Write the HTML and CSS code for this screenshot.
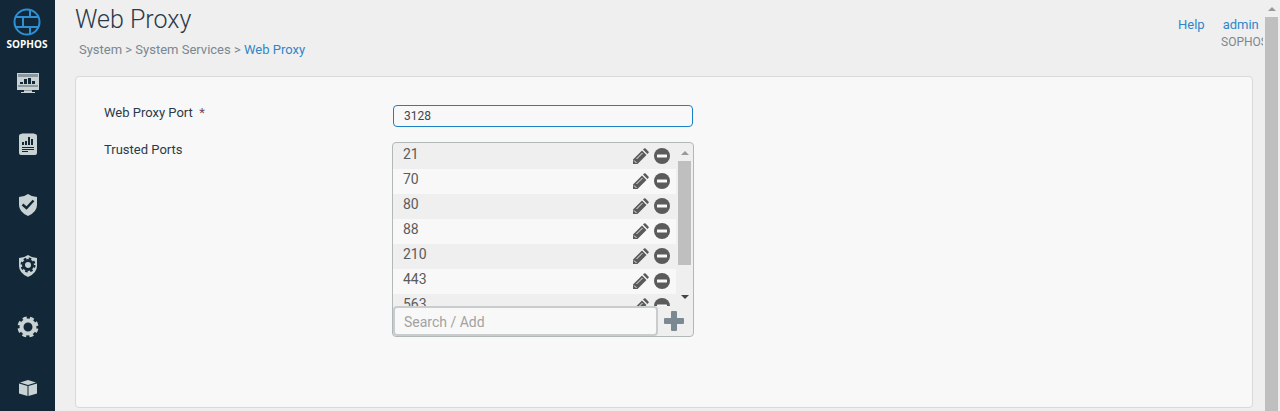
FILE: index.html
```html
<!DOCTYPE html>
<html lang="en">
<head>
    <meta charset="UTF-8">
    <meta name="viewport" content="width=device-width, initial-scale=1.0">
    <title>Web Proxy</title>
    <link rel="stylesheet" href="styles.css">
</head>
<body>
    <!-- Shared icons -->
    <svg class="sprite" aria-hidden="true">
        <symbol id="icon-edit" viewBox="0 0 16 16">
            <path fill="#5b5b5b" d="M0 16v-4.500L9 2.500l4.500 4.500-9 9zM10 1.600l1-1q.8-.8 1.600 0l2.800 2.800q.8.800 0 1.600l-1 1z"/>
            <path stroke="#efefef" fill="none" d="M3.500 11l6-6M1 12.500l2.500 2.500"/>
        </symbol>
        <symbol id="icon-remove" viewBox="0 0 16 16">
            <circle cx="8" cy="8" r="8" fill="#5b5b5b"/>
            <rect x="3" y="6.500" width="10" height="3" rx=".5" fill="#f8f8f8"/>
        </symbol>
    </svg>

    <nav class="sidebar">
        <a href="#" class="logo">
            <svg width="28" height="28" viewBox="0 0 28 28" fill="none" stroke="#2f8fd3" stroke-width="2">
                <circle cx="14" cy="14" r="12.500"/>
                <path d="M3 9h22M3 19h22M17 2v7M10 9v10M17 19v7"/>
            </svg>
            <span>SOPHOS</span>
        </a>
        <a href="#" class="nav-item" aria-label="Control center">
            <svg width="22" height="20" viewBox="0 0 22 20">
                <path fill="#c9d2d2" d="M0 0h22v17H0zM7 17h8v2H7zM4 19h14v1H4z"/>
                <path fill="#8c989c" d="M1 1h20v3H1zM1 12h20v2H1zM7 17h8v1H7z"/>
                <path fill="#122838" d="M3 9h3v2H3zM7 6h3v5H7zM11 5h3v6h-3zM15 8h3v3h-3z"/>
            </svg>
        </a>
        <a href="#" class="nav-item" aria-label="Reports">
            <svg width="18" height="22" viewBox="0 0 18 22">
                <path fill="#76848b" d="M3 0h12l2 3H1z"/>
                <rect y="1" width="18" height="21" rx="2" fill="#c9d2d2"/>
                <path fill="#122838" d="M3 9h2v3H3zM6 8h2v4H6zM9 4h2v8H9zM12 6h2v6h-2zM3 14h12v1H3zM3 16h12v1H3zM3 18h6v1H3z"/>
            </svg>
        </a>
        <a href="#" class="nav-item" aria-label="Protect">
            <svg width="18" height="22" viewBox="0 0 18 22">
                <path fill="#c9d2d2" d="M9 0q4 3 9 3v8q0 7-9 11-9-4-9-11V3q5 0 9-3z"/>
                <path fill="none" stroke="#122838" stroke-width="2.500" d="M3.500 10.500l4 3.500 7-7.500"/>
            </svg>
        </a>
        <a href="#" class="nav-item" aria-label="Configure">
            <svg width="18" height="22" viewBox="0 0 18 22">
                <path fill="#c9d2d2" d="M9 0q4 3 9 3v8q0 7-9 11-9-4-9-11V3q5 0 9-3z"/>
                <circle cx="9" cy="10" r="6.500" fill="none" stroke="#122838" stroke-width="2" stroke-dasharray="2.600 2.500"/>
                <circle cx="9" cy="10" r="4.500" fill="#c9d2d2" stroke="#122838" stroke-width="3"/>
            </svg>
        </a>
        <a href="#" class="nav-item" aria-label="System">
            <svg width="22" height="22" viewBox="0 0 22 22" fill="none" stroke="#c9d2d2">
                <circle cx="11" cy="11" r="6.500" stroke-width="4"/>
                <circle cx="11" cy="11" r="9" stroke-width="3" stroke-dasharray="4 3.070" transform="rotate(10 11 11)"/>
            </svg>
        </a>
        <a href="#" class="nav-item" aria-label="Packages">
            <svg width="18" height="16" viewBox="0 0 18 16" fill="#c9d2d2">
                <path d="M9 0l8 2.500L9 5 1 2.500zM0 3.500l8.500 2.500V16L0 13.500zM18 3.500L9.500 6V16l8.500-2.500z"/>
            </svg>
        </a>
    </nav>

    <main class="content">
        <header class="header">
            <div>
                <h1>Web Proxy</h1>
                <div class="breadcrumb">System &gt; System Services &gt; <a href="#">Web Proxy</a></div>
            </div>
            <div class="account">
                <div class="account-links">
                    <a href="#">Help</a>
                    <a href="#">admin</a>
                </div>
                <div class="company">SOPHOS</div>
            </div>
        </header>

        <form class="panel">
            <div class="form-row">
                <label for="proxyPort">Web Proxy Port &nbsp;<span class="required">*</span></label>
                <input type="text" id="proxyPort" class="text-input" value="3128">
            </div>
            <div class="form-row">
                <label for="portSearch">Trusted Ports</label>
                <div class="port-box">
                    <div class="port-scroll">
                        <ul class="port-list">
                            <li><span>21</span><button type="button" aria-label="Edit"><svg><use href="#icon-edit"/></svg></button><button type="button" aria-label="Remove"><svg><use href="#icon-remove"/></svg></button></li>
                            <li><span>70</span><button type="button" aria-label="Edit"><svg><use href="#icon-edit"/></svg></button><button type="button" aria-label="Remove"><svg><use href="#icon-remove"/></svg></button></li>
                            <li><span>80</span><button type="button" aria-label="Edit"><svg><use href="#icon-edit"/></svg></button><button type="button" aria-label="Remove"><svg><use href="#icon-remove"/></svg></button></li>
                            <li><span>88</span><button type="button" aria-label="Edit"><svg><use href="#icon-edit"/></svg></button><button type="button" aria-label="Remove"><svg><use href="#icon-remove"/></svg></button></li>
                            <li><span>210</span><button type="button" aria-label="Edit"><svg><use href="#icon-edit"/></svg></button><button type="button" aria-label="Remove"><svg><use href="#icon-remove"/></svg></button></li>
                            <li><span>443</span><button type="button" aria-label="Edit"><svg><use href="#icon-edit"/></svg></button><button type="button" aria-label="Remove"><svg><use href="#icon-remove"/></svg></button></li>
                            <li><span>563</span><button type="button" aria-label="Edit"><svg><use href="#icon-edit"/></svg></button><button type="button" aria-label="Remove"><svg><use href="#icon-remove"/></svg></button></li>
                        </ul>
                        <div class="scrollbar">
                            <span class="arrow-up"></span>
                            <span class="thumb"></span>
                            <span class="arrow-down"></span>
                        </div>
                    </div>
                    <div class="port-add">
                        <input type="text" id="portSearch" placeholder="Search / Add">
                        <button type="button" aria-label="Add">
                            <svg width="20" height="20" viewBox="0 0 20 20"><path fill="#7b8a92" d="M8 0h4q1 0 1 1v6h6q1 0 1 1v4q0 1-1 1h-6v6q0 1-1 1H8q-1 0-1-1v-6H1q-1 0-1-1V8q0-1 1-1h6V1q0-1 1-1z"/></svg>
                        </button>
                    </div>
                </div>
            </div>
        </form>
    </main>

    <div class="scrollbar page-scrollbar">
        <span class="arrow-up"></span>
        <span class="thumb"></span>
    </div>
</body>
</html>
```
FILE: styles.css
```css
* {
    box-sizing: border-box;
}

body {
    display: flex;
    height: 100vh;
    margin: 0;
    overflow: hidden;
    background-color: #efefef;
    color: #2b3a4a;
    font-family: Roboto, "Liberation Sans", sans-serif;
    font-size: 13px;
    line-height: 16px;
}

a {
    color: #2f86c8;
    text-decoration: none;
}

button {
    display: flex;
    padding: 0;
    border: none;
    background: none;
    cursor: pointer;
}

.sprite {
    display: none;
}

/* Sidebar */
.sidebar {
    flex: 0 0 55px;
    overflow: hidden;
    background-color: #122838;
}

.logo {
    display: flex;
    flex-direction: column;
    align-items: center;
    height: 52px;
    padding: 8px 1px 0 0;
    color: #fff;
    font-family: "Open Sans", sans-serif;
    font-size: 10px;
    font-weight: bold;
}

.nav-item {
    display: flex;
    align-items: center;
    justify-content: center;
    height: 61px;
    padding-left: 1px;
}

/* Header */
.content {
    display: flex;
    flex: 1;
    flex-direction: column;
    min-width: 0;
    padding: 4px 0 3px 20px;
}

.header {
    display: flex;
    justify-content: space-between;
    height: 72px;
}

h1 {
    margin: 0;
    font-size: 25px;
    font-weight: 300;
    line-height: 32px;
}

.breadcrumb {
    padding: 6px 4px;
    color: #7b8790;
}

.account {
    width: 85px;
    padding-top: 13px;
    overflow: hidden;
}

.account-links {
    display: flex;
    gap: 18px;
}

.company {
    padding: 1px 0 0 43px;
    color: #7b8790;
    font-size: 12px;
}

/* Form */
.panel {
    flex: 1;
    margin-right: 10px;
    padding: 28px;
    border: 1px solid #d8d8d8;
    border-radius: 4px;
    background-color: #f8f8f8;
}

.form-row {
    display: flex;
    margin-bottom: 15px;
}

.form-row label {
    flex: 0 0 288px;
}

.required {
    color: #70465a;
}

.text-input {
    width: 300px;
    height: 22px;
    margin-left: 1px;
    padding: 0 10px;
    border: 1px solid #1b80c4;
    border-radius: 4px;
    background-color: #f8f8f8;
    color: #3c4650;
    font: 12px Roboto, sans-serif;
}

.port-box {
    width: 302px;
    border: 1px solid #b0b8b8;
    border-radius: 4px;
    background-color: #efefef;
    overflow: hidden;
}

.port-scroll {
    display: flex;
    height: 163px;
    padding-top: 1px;
    overflow: hidden;
}

.port-list {
    flex: 1;
    margin: 0;
    padding: 0;
    list-style: none;
}

.port-list li {
    display: flex;
    align-items: center;
    gap: 5px;
    height: 25px;
    padding: 0 6px 2px 10px;
    color: #5b5b5b;
    font-size: 14px;
}

.port-list li:nth-child(even) {
    background-color: #f8f8f8;
}

.port-list span {
    flex: 1;
    padding-bottom: 4px;
}

.port-list svg {
    width: 16px;
    height: 16px;
}

.port-add {
    display: flex;
    gap: 6px;
    align-items: center;
}

.port-add input {
    width: 265px;
    height: 30px;
    padding: 2px 9px 0;
    border: 2px solid #c8cccc;
    border-radius: 4px;
    background-color: #f8f8f8;
    font: 14px Roboto, sans-serif;
}

.port-add input::placeholder {
    color: #a2a2a2;
}

/* Scrollbars */
.scrollbar {
    display: flex;
    flex: 0 0 17px;
    flex-direction: column;
    align-items: center;
}

.arrow-up {
    margin: 7px 0 6px;
    border: 4px solid transparent;
    border-top: none;
    border-bottom-color: #999;
}

.arrow-down {
    margin: auto 0 7px;
    border: 4px solid transparent;
    border-bottom: none;
    border-top-color: #444;
}

.thumb {
    width: 13px;
    height: 104px;
    background-color: #bfbfbf;
}

.page-scrollbar .thumb {
    flex: 1;
}
```
